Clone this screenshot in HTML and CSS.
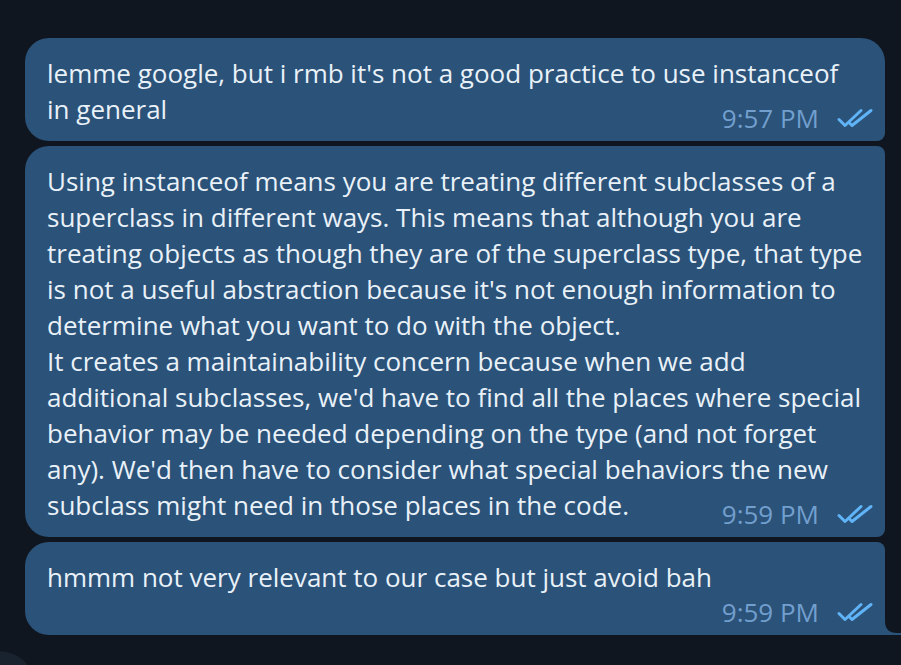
FILE: index.html
```html
<!DOCTYPE html>
<html>
<head>
<meta charset="utf-8">
<link rel="stylesheet" href="styles.css">
</head>
<body>
<div class="chat">
  <div class="bubble first">
    <div class="text">lemme google, but i rmb it's not a good practice to use instanceof<br>in general</div>
    <div class="meta meta-inline"><span class="time">9:57 PM</span>
      <svg class="checks" width="36" height="20" viewBox="0 0 36 20"><path d="M2 11.5 L8 17.5 L24 2.5" /><path d="M12.5 15 L15 17.5 L34 2.5" /></svg>
    </div>
  </div>
  <div class="bubble middle">
    <div class="text">Using instanceof means you are treating different subclasses of a<br>superclass in different ways. This means that although you are<br>treating objects as though they are of the superclass type, that type<br>is not a useful abstraction because it's not enough information to<br>determine what you want to do with the object.<br>It creates a maintainability concern because when we add<br>additional subclasses, we'd have to find all the places where special<br>behavior may be needed depending on the type (and not forget<br>any). We'd then have to consider what special behaviors the new<br>subclass might need in those places in the code.</div>
    <div class="meta meta-inline"><span class="time">9:59 PM</span>
      <svg class="checks" width="36" height="20" viewBox="0 0 36 20"><path d="M2 11.5 L8 17.5 L24 2.5" /><path d="M12.5 15 L15 17.5 L34 2.5" /></svg>
    </div>
  </div>
  <div class="bubble last">
    <div class="text">hmmm not very relevant to our case but just avoid bah</div>
    <div class="meta meta-below"><span class="time">9:59 PM</span>
      <svg class="checks" width="36" height="20" viewBox="0 0 36 20"><path d="M2 11.5 L8 17.5 L24 2.5" /><path d="M12.5 15 L15 17.5 L34 2.5" /></svg>
    </div>
    <svg class="tail" width="16" height="14" viewBox="0 0 16 14"><path d="M0 0 Q0 12 12 12 H16 V14 H0 Z" /></svg>
  </div>
</div>
<div class="scroll-btn"></div>
</body>
</html>
```

FILE: styles.css
```css
html, body {
  margin: 0;
  padding: 0;
  background: #0f1620;
  width: 901px;
  height: 665px;
  overflow: hidden;
}

body {
  position: relative;
}

.chat {
  padding: 38px 16px 0 25px;
  display: flex;
  flex-direction: column;
  gap: 5px;
  font-family: "Open Sans", "Noto Sans", sans-serif;
}

.bubble {
  position: relative;
  background: #2b5278;
  color: #e9f1f8;
  padding: 17px 12px 5px 22px;
  border-radius: 24px 8px 8px 24px;
}

.bubble.first {
  border-radius: 24px 24px 8px 24px;
}

.bubble.last {
  border-radius: 24px 8px 0 24px;
}

.text {
  font-size: 26px;
  line-height: 36px;
  white-space: nowrap;
}

.meta {
  display: flex;
  justify-content: flex-end;
  align-items: center;
  gap: 18px;
  height: 36px;
}

.meta-inline {
  margin-top: -27px;
}

.meta-below {
  margin-top: -1px;
}

.time {
  font-size: 26px;
  color: #729fce;
}

.checks {
  fill: none;
  stroke: #5fb3f6;
  stroke-width: 3;
  stroke-linecap: round;
  stroke-linejoin: round;
}

.tail {
  position: absolute;
  right: -16px;
  bottom: 0;
  fill: #2b5278;
}

.scroll-btn {
  position: absolute;
  left: 0;
  top: 651px;
  width: 36px;
  height: 14px;
  background: radial-gradient(circle 35px at 0 35px, #18232f 34px, rgba(24, 35, 47, 0) 35px);
}
```
